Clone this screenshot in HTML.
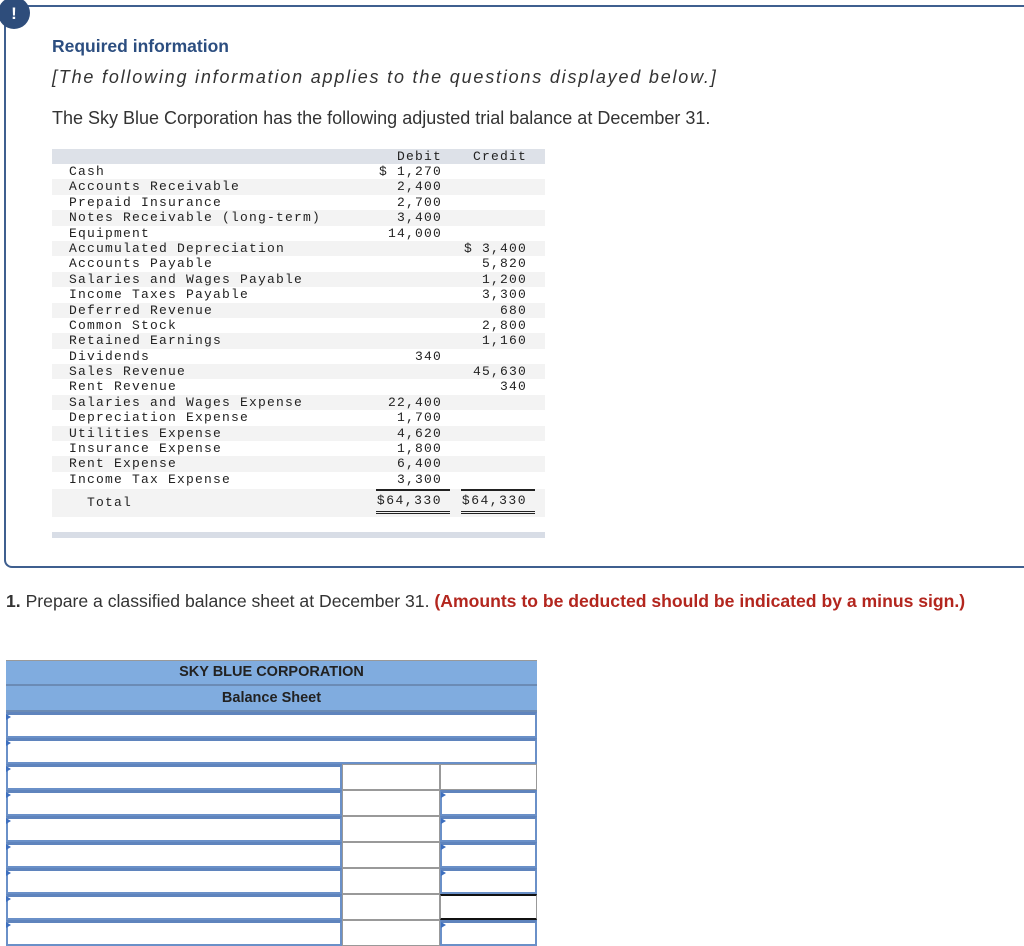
<!DOCTYPE html>
<html><head><meta charset="utf-8"><style>
body{margin:0;width:1024px;height:939px;background:#fff;position:relative;overflow:hidden;font-family:"Liberation Sans",sans-serif;color:#222}
.box{position:absolute;left:4px;top:5px;width:1030px;height:559px;border:2px solid #3f5f8f;border-right:none;border-radius:0 0 0 8px}
.badge{position:absolute;left:-8px;top:-10px;width:32px;height:32px;border-radius:50%;background:#2e4d7b;color:#fff;font-weight:bold;font-size:17px;text-align:center;line-height:34px}
.t{position:absolute;left:52px}
.tb{position:absolute;left:52px;top:149px;width:493px;font-family:"Liberation Mono",monospace;font-size:13px;letter-spacing:1.2px}
.r{height:15.4px;line-height:15.4px;position:relative;white-space:pre}
.r:nth-child(even){background:#f3f3f3}
.r span{position:absolute}
.l{left:17px}.d{right:103px}.c{right:18px}
.bs{position:absolute;left:6px;top:660px;width:531px}
.h{background:#80acdf;text-align:center;font-weight:bold;font-size:14.5px;border-bottom:2px solid #6b8bb5}
.row{position:absolute;left:0;height:26px;width:531px}
.cell{position:absolute;top:0;height:22px;box-sizing:border-box}
.bl{border:2px solid #6a90c8;border-top:3px solid #5f84bd;background:#fff}
.gr{border:1px solid #999;background:#fff}
.tri{position:absolute;left:0;top:2px;width:0;height:0;border-left:5px solid #3d6fbf;border-top:3px solid transparent;border-bottom:3px solid transparent}
</style></head><body>
<div class="box"><div class="badge">!</div></div>
<div class="t" style="top:36px;font-weight:bold;color:#2c4e80;font-size:17.5px">Required information</div>
<div class="t" style="top:67px;font-style:italic;font-size:18px;letter-spacing:1.8px;color:#333">[The following information applies to the questions displayed below.]</div>
<div class="t" style="top:108px;font-size:18px;color:#333">The Sky Blue Corporation has the following adjusted trial balance at December 31.</div>
<div class="tb">
<div style="height:15px;line-height:15px;background:#dde1e8;position:relative"><span style="position:absolute;right:103px">Debit</span><span style="position:absolute;right:18px">Credit</span></div>
<div>
<div class="r"><span class="l">Cash</span><span class="d">$ 1,270</span></div>
<div class="r"><span class="l">Accounts Receivable</span><span class="d">2,400</span></div>
<div class="r"><span class="l">Prepaid Insurance</span><span class="d">2,700</span></div>
<div class="r"><span class="l">Notes Receivable (long-term)</span><span class="d">3,400</span></div>
<div class="r"><span class="l">Equipment</span><span class="d">14,000</span></div>
<div class="r"><span class="l">Accumulated Depreciation</span><span class="c">$ 3,400</span></div>
<div class="r"><span class="l">Accounts Payable</span><span class="c">5,820</span></div>
<div class="r"><span class="l">Salaries and Wages Payable</span><span class="c">1,200</span></div>
<div class="r"><span class="l">Income Taxes Payable</span><span class="c">3,300</span></div>
<div class="r"><span class="l">Deferred Revenue</span><span class="c">680</span></div>
<div class="r"><span class="l">Common Stock</span><span class="c">2,800</span></div>
<div class="r"><span class="l">Retained Earnings</span><span class="c">1,160</span></div>
<div class="r"><span class="l">Dividends</span><span class="d">340</span></div>
<div class="r"><span class="l">Sales Revenue</span><span class="c">45,630</span></div>
<div class="r"><span class="l">Rent Revenue</span><span class="c">340</span></div>
<div class="r"><span class="l">Salaries and Wages Expense</span><span class="d">22,400</span></div>
<div class="r"><span class="l">Depreciation Expense</span><span class="d">1,700</span></div>
<div class="r"><span class="l">Utilities Expense</span><span class="d">4,620</span></div>
<div class="r"><span class="l">Insurance Expense</span><span class="d">1,800</span></div>
<div class="r"><span class="l">Rent Expense</span><span class="d">6,400</span></div>
<div class="r"><span class="l">Income Tax Expense</span><span class="d">3,300</span></div>
</div>
<div style="position:relative;height:28px;background:#f3f3f3;margin-top:2px">
<span style="position:absolute;left:35px;top:6px">Total</span>
<div style="position:absolute;left:324px;width:74px;top:0;border-top:2px solid #222;height:20px;border-bottom:3px double #222"></div>
<div style="position:absolute;left:409px;width:74px;top:0;border-top:2px solid #222;height:20px;border-bottom:3px double #222"></div>
<span style="position:absolute;right:103px;top:4px;letter-spacing:1.5px">$64,330</span>
<span style="position:absolute;right:18px;top:4px;letter-spacing:1.5px">$64,330</span>
</div>
<div style="height:6px;background:#d8dde6;margin-top:15px"></div>
</div>
<div style="position:absolute;left:6px;top:591px;font-size:17.6px;color:#333"><b>1.</b> Prepare a classified balance sheet at December 31. <b style="color:#b3261e">(Amounts to be deducted should be indicated by a minus sign.)</b></div>
<div class="bs">
<div class="h" style="height:23px;line-height:23px;border-top:1px solid #999">SKY BLUE CORPORATION</div>
<div class="h" style="height:24px;line-height:24px">Balance Sheet</div>
<div style="position:relative">
<div class="row" style="top:0"><div class="cell bl" style="left:0;width:531px;height:26px"></div><div class="tri"></div></div>
<div class="row" style="top:26px"><div class="cell bl" style="left:0;width:531px;height:26px"></div><div class="tri"></div></div>
<div class="row" style="top:52px"><div class="cell bl" style="left:0;width:336px;height:26px"></div><div class="tri"></div><div class="cell gr" style="left:336px;width:98px;height:26px"></div><div class="cell gr" style="left:434px;width:97px;height:26px"></div></div>
<div class="row" style="top:78px"><div class="cell bl" style="left:0;width:336px;height:26px"></div><div class="tri"></div><div class="cell gr" style="left:336px;width:98px;height:26px"></div><div class="cell bl" style="left:434px;width:97px;height:26px"></div><div class="tri" style="left:435px"></div></div>
<div class="row" style="top:104px"><div class="cell bl" style="left:0;width:336px;height:26px"></div><div class="tri"></div><div class="cell gr" style="left:336px;width:98px;height:26px"></div><div class="cell bl" style="left:434px;width:97px;height:26px"></div><div class="tri" style="left:435px"></div></div>
<div class="row" style="top:130px"><div class="cell bl" style="left:0;width:336px;height:26px"></div><div class="tri"></div><div class="cell gr" style="left:336px;width:98px;height:26px"></div><div class="cell bl" style="left:434px;width:97px;height:26px"></div><div class="tri" style="left:435px"></div></div>
<div class="row" style="top:156px"><div class="cell bl" style="left:0;width:336px;height:26px"></div><div class="tri"></div><div class="cell gr" style="left:336px;width:98px;height:26px"></div><div class="cell bl" style="left:434px;width:97px;height:26px"></div><div class="tri" style="left:435px"></div></div>
<div class="row" style="top:182px"><div class="cell bl" style="left:0;width:336px;height:26px"></div><div class="tri"></div><div class="cell gr" style="left:336px;width:98px;height:26px"></div><div class="cell gr" style="left:434px;width:97px;height:26px;border-top:2px solid #111;border-bottom:2px solid #111"></div></div>
<div class="row" style="top:208px"><div class="cell bl" style="left:0;width:336px;height:26px"></div><div class="tri"></div><div class="cell gr" style="left:336px;width:98px;height:26px"></div><div class="cell bl" style="left:434px;width:97px;height:26px"></div><div class="tri" style="left:435px"></div></div>
</div>
</div>
</body></html>
